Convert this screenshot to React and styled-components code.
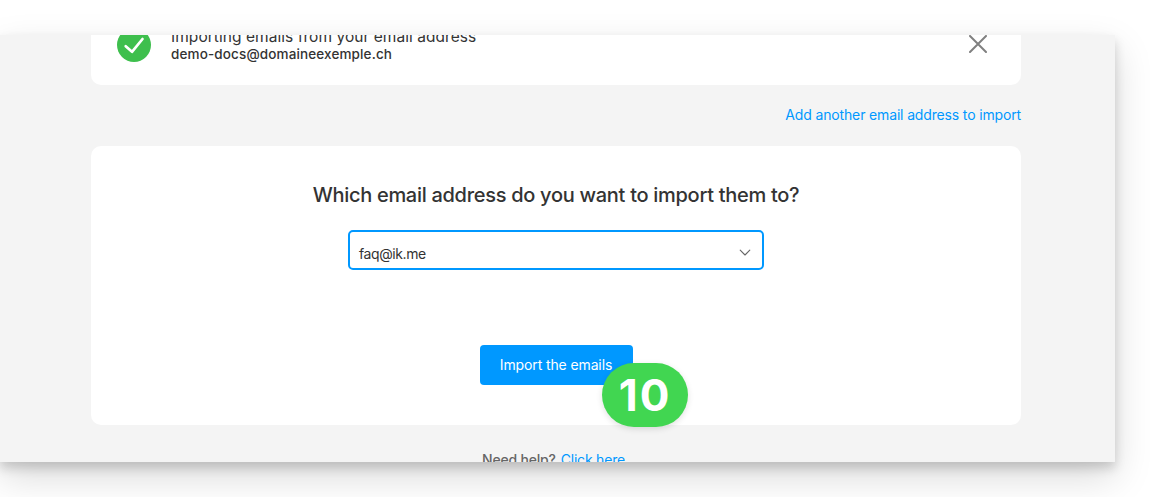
import styled, { createGlobalStyle } from 'styled-components';

const GlobalStyle = createGlobalStyle`
  * {
    box-sizing: border-box;
  }
  body {
    margin: 0;
    background-color: #fff;
    font-family: Inter, "Liberation Sans", sans-serif;
    color: #333;
    overflow: hidden;
  }
`;

function App() {
  return (
    <Page>
      <GlobalStyle />
      <Window>
        <ImportCard>
          <CheckCircle>
            <svg width="34" height="34" viewBox="0 0 34 34" fill="none">
              <path
                d="M8.7 18.2L15 23.8L25.5 11"
                stroke="#fff"
                strokeWidth="2.7"
                strokeLinecap="round"
                strokeLinejoin="round"
              />
            </svg>
          </CheckCircle>
          <ImportText>
            <ImportTitle>Importing emails from your email address</ImportTitle>
            <ImportAddress>demo-docs@domaineexemple.ch</ImportAddress>
          </ImportText>
          <CloseButton aria-label="Close">
            <svg width="18" height="18" viewBox="0 0 18 18" fill="none">
              <path
                d="M1 1L17 17M17 1L1 17"
                stroke="#808080"
                strokeWidth="2"
                strokeLinecap="round"
              />
            </svg>
          </CloseButton>
        </ImportCard>
        <AddRow>
          <AddLink>Add another email address to import</AddLink>
        </AddRow>
        <TargetCard>
          <Question>Which email address do you want to import them to?</Question>
          <Select>
            <SelectValue>faq@ik.me</SelectValue>
            <svg width="12" height="8" viewBox="0 0 12 8" fill="none">
              <path
                d="M1.2 1.2L6 6L10.8 1.2"
                stroke="#666"
                strokeWidth="1.1"
                strokeLinecap="round"
                strokeLinejoin="round"
              />
            </svg>
          </Select>
          <ButtonWrap>
            <ImportButton>Import the emails</ImportButton>
            <StepBadge>10</StepBadge>
          </ButtonWrap>
        </TargetCard>
        <Help>
          <HelpLabel>Need help?</HelpLabel>
          <HelpLink>Click here</HelpLink>
        </Help>
      </Window>
    </Page>
  );
}

export default App;

const Page = styled.div`
  height: 497px;
  padding-top: 35px;
  overflow: hidden;
`;

const Window = styled.div`
  display: flex;
  flex-direction: column;
  width: 1115px;
  height: 427px;
  padding: 0 94px 0 91px;
  background-color: #f4f4f4;
  box-shadow: 0 6px 10px rgba(0, 0, 0, 0.16), 0 15px 36px rgba(0, 0, 0, 0.15);
  overflow: hidden;
`;

const ImportCard = styled.div`
  display: flex;
  flex-shrink: 0;
  align-items: flex-start;
  height: 50px;
  padding: 0 34px 0 26px;
  background-color: #fff;
  border-radius: 0 0 10px 10px;
`;

const CheckCircle = styled.div`
  width: 34px;
  height: 34px;
  margin-top: -7px;
  background-color: #3ebf4d;
  border-radius: 50%;
`;

const ImportText = styled.div`
  flex: 1;
  margin: -7px 0 0 20px;
  white-space: nowrap;
`;

const ImportTitle = styled.div`
  font-size: 15.5px;
  line-height: 18px;
  letter-spacing: 0.05px;
`;

const ImportAddress = styled.div`
  font-size: 13.5px;
  font-weight: 500;
  line-height: 17px;
  letter-spacing: 0.13px;
`;

const CloseButton = styled.button`
  display: flex;
  padding: 0;
  border: none;
  background: none;
`;

const AddRow = styled.div`
  display: flex;
  flex-shrink: 0;
  justify-content: flex-end;
  height: 61px;
  padding-top: 20px;
`;

const AddLink = styled.a`
  color: #0098ff;
  font-size: 14px;
  line-height: 20px;
  letter-spacing: -0.15px;
  white-space: nowrap;
`;

const TargetCard = styled.div`
  display: flex;
  flex-direction: column;
  flex-shrink: 0;
  align-items: center;
  height: 279px;
  padding-top: 35px;
  background-color: #fff;
  border-radius: 10px;
`;

const Question = styled.div`
  font-size: 20px;
  font-weight: 500;
  line-height: 28px;
  letter-spacing: -0.29px;
  white-space: nowrap;
`;

const Select = styled.div`
  display: flex;
  justify-content: space-between;
  align-items: center;
  width: 416px;
  height: 40px;
  margin-top: 21px;
  padding: 5px 11px 0 9px;
  border: 2px solid #0098ff;
  border-radius: 5px;
`;

const SelectValue = styled.span`
  padding-top: 2px;
  font-size: 14px;
  line-height: 20px;
  letter-spacing: -0.4px;
`;

const ButtonWrap = styled.div`
  position: relative;
  margin-top: 75px;
`;

const ImportButton = styled.button`
  display: block;
  width: 153px;
  height: 40px;
  padding: 0 0 1px;
  border: none;
  border-radius: 4px;
  background-color: #0098ff;
  color: #fff;
  font-family: inherit;
  font-size: 14px;
  letter-spacing: -0.12px;
  white-space: nowrap;
`;

const StepBadge = styled.div`
  position: absolute;
  top: 18px;
  left: 122.5px;
  width: 86px;
  height: 64px;
  border-radius: 32px;
  background-color: #41d651;
  box-shadow: 0 2px 6px rgba(0, 0, 0, 0.12);
  color: #fff;
  font-size: 44px;
  font-weight: 700;
  line-height: 64px;
  letter-spacing: 2px;
  text-align: center;
`;

const Help = styled.div`
  display: flex;
  justify-content: center;
  gap: 5px;
  padding-top: 25px;
  padding-right: 5px;
  font-size: 14px;
  line-height: 20px;
  letter-spacing: -0.2px;
  white-space: nowrap;
`;

const HelpLabel = styled.span`
  color: #666;
  font-weight: 500;
`;

const HelpLink = styled.a`
  color: #0098ff;
`;
